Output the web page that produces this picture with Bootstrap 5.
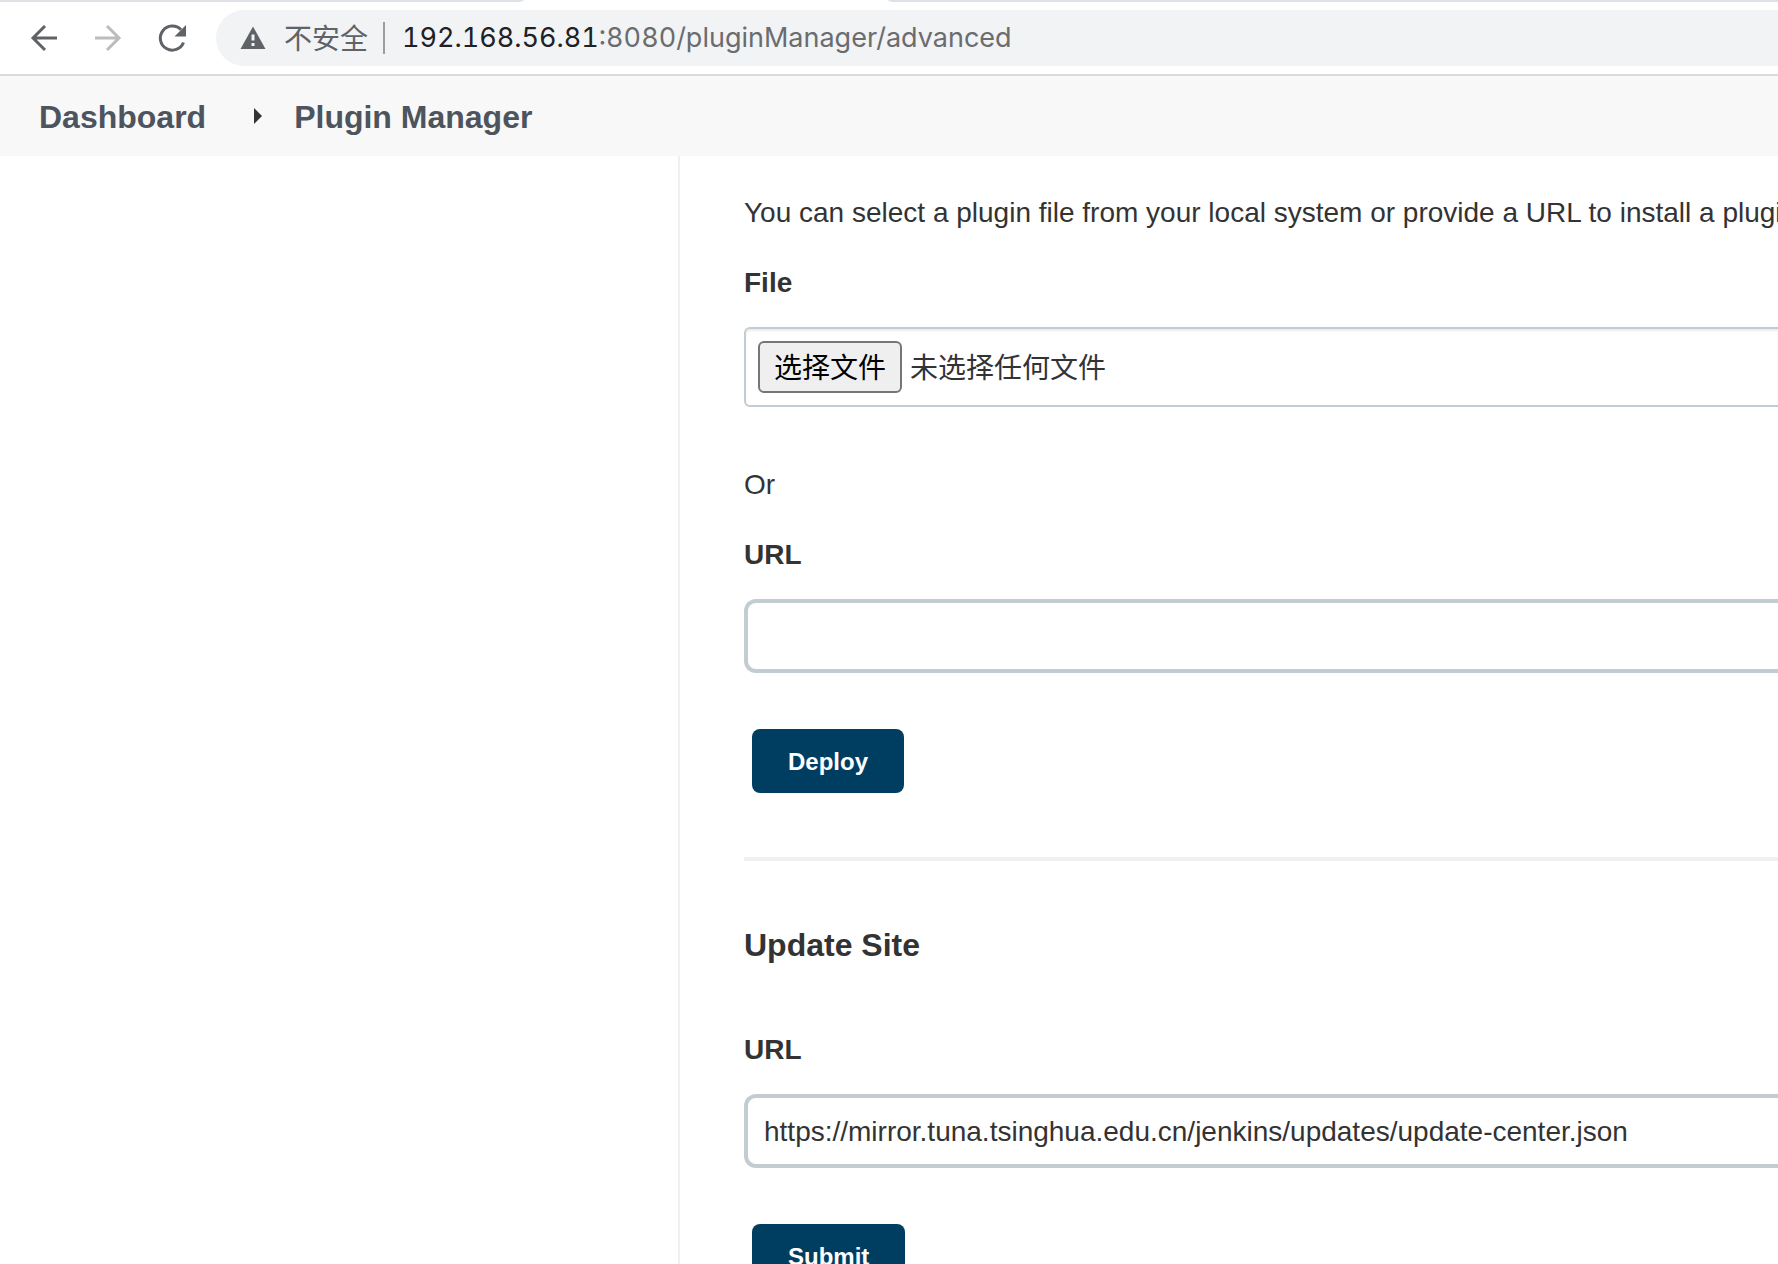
<!DOCTYPE html>
<html lang="zh-CN">
<head>
<meta charset="utf-8">
<meta name="viewport" content="width=device-width, initial-scale=1">
<title>Plugin Manager</title>
<link href="https://cdn.jsdelivr.net/npm/bootstrap@5.3.0/dist/css/bootstrap.min.css" rel="stylesheet">
<style>
  body { font-family: "Liberation Sans", "Noto Sans CJK SC", sans-serif; font-size: 28px; line-height: 40px; color: #333; background: #fff; height: 100vh; }
  /* browser chrome */
  .tabstrip { height: 2px; }
  .tab-idle { background: #dee1e6; }
  .tab-first { width: 524px; border-bottom-right-radius: 8px 2px; }
  .tab-active { width: 364px; }
  .tab-last { border-bottom-left-radius: 8px 2px; }
  .toolbar { height: 74px; padding-left: 28px; border-bottom: 2px solid #dadada; }
  .tool-group { gap: 32px; margin-right: 28px; }
  .tool-btn { width: 32px; height: 32px; color: #5f6368; }
  .tool-btn:disabled { color: #babcbe; opacity: 1; }
  .omnibox { height: 56px; background: #f1f3f4; border-radius: 28px 0 0 28px; padding-left: 23px; font-family: Inter, "Noto Sans CJK SC", sans-serif; font-size: 27px; font-variant-numeric: tabular-nums; color: #6a6c6f; }
  .omni-state { padding-top: 2px; margin-left: 17px; font-size: 28px; color: #5f6368; }
  .omni-rule { width: 2px; height: 32px; background: #9b9ea1; margin: 0 17px 0 15px; }
  .omni-host { color: #202124; }
  /* Jenkins page */
  .crumbs { height: 80px; background: #f8f8f8; padding: 2px 0 0 39px; font-size: 32px; }
  .crumbs a { color: #4d545d; }
  .crumb-arrow { margin: 0 32px 2px 48px; }
  .side-pane { width: 680px; border-right: 2px solid #f0f0f0; }
  .main-pane { min-width: 0; padding: 37px 0 0 64px; }
  .main-pane p { margin-bottom: 30px; }
  .field-label { display: block; font-weight: 700; margin-bottom: 24px; }
  .file-box { height: 80px; border: 2px solid #c3ccd1; border-radius: 6px 0 0 6px; padding-left: 12px; margin-bottom: 58px; box-shadow: inset 0 2px 2px rgba(0,0,0,.075); }
  .file-btn { width: 144px; height: 52px; border: 2px solid #767676; border-radius: 6px; background: #efefef; color: #000; padding: 4px 0 0; line-height: 40px; }
  .file-name { padding-top: 4px; }
  .jenkins-input { height: 74px; border: 4px solid #c3ccd1; border-radius: 12px 0 0 12px; padding: 2px 16px 0; font-size: 28px; color: #333; margin-bottom: 56px; }
  .jenkins-btn { display: block; min-width: 152px; height: 64px; margin-left: 8px; padding: 2px 36px 0; border: 0; border-radius: 8px; background: #003e61; color: #fff; font-size: 24px; font-weight: 700; }
  .jenkins-btn:hover { background: #00517f; color: #fff; }
  .section-rule { height: 4px; margin: 64px 0; background: #f0f0f0; opacity: 1; border: 0; }
  .section-title { font-size: 32px; line-height: 40px; font-weight: 700; margin-bottom: 65px; }
</style>
</head>
<body class="d-flex flex-column overflow-hidden">
<div class="tabstrip d-flex flex-shrink-0">
  <div class="tab-idle tab-first"></div>
  <div class="tab-active"></div>
  <div class="tab-idle tab-last flex-grow-1"></div>
</div>
<nav class="toolbar d-flex align-items-center flex-shrink-0" aria-label="浏览器工具栏">
  <div class="tool-group d-flex flex-shrink-0">
    <button class="tool-btn btn p-0 border-0 d-flex" type="button" aria-label="后退">
      <svg width="32" height="32" viewBox="0 0 32 32" fill="none" stroke="currentColor" stroke-width="3"><path d="M29 16H5M17 4L5 16l12 12"/></svg>
    </button>
    <button class="tool-btn btn p-0 border-0 d-flex" type="button" aria-label="前进" disabled>
      <svg width="32" height="32" viewBox="0 0 32 32" fill="none" stroke="currentColor" stroke-width="3"><path d="M3 16h24M15 4l12 12-12 12"/></svg>
    </button>
    <button class="tool-btn btn p-0 border-0 d-flex" type="button" aria-label="重新加载">
      <svg width="32" height="32" viewBox="0 0 32 32"><path d="M27.500 20.500A12 12 0 1 1 25 7.800" fill="none" stroke="currentColor" stroke-width="3"/><path d="M30 3v11.500H18.500z" fill="currentColor"/></svg>
    </button>
  </div>
  <div class="omnibox d-flex align-items-center flex-grow-1 text-nowrap overflow-hidden">
    <svg class="flex-shrink-0" width="28" height="28" viewBox="0 0 28 28"><path d="M14 2.500L26.500 25h-25z" fill="#5f6368"/><path d="M12.500 10.500h3v6h-3zM12.500 19h3v3h-3z" fill="#f1f3f4"/></svg>
    <span class="omni-state">不安全</span>
    <span class="omni-rule"></span>
    <div role="textbox" contenteditable="true" spellcheck="false" aria-label="地址"><span class="omni-host">192.168.56.81</span>:8080/pluginManager/advanced</div>
  </div>
</nav>
<nav class="crumbs d-flex align-items-center flex-shrink-0 fw-bold" aria-label="breadcrumb">
  <a class="text-decoration-none" href="#">Dashboard</a>
  <svg class="crumb-arrow" width="8" height="16" viewBox="0 0 8 16"><path d="M0 0l8 8-8 8z" fill="#333"/></svg>
  <a class="text-decoration-none" href="#">Plugin Manager</a>
</nav>
<div class="d-flex flex-grow-1 overflow-hidden">
  <aside class="side-pane flex-shrink-0"></aside>
  <main class="main-pane flex-grow-1 overflow-hidden">
    <form onsubmit="return false">
      <p class="text-nowrap">You can select a plugin file from your local system or provide a URL to install a plugin</p>
      <label class="field-label" for="plugin-file">File</label>
      <div class="file-box border-end-0 d-flex align-items-center gap-2">
        <button class="file-btn" type="button" onclick="document.getElementById('plugin-file').click()">选择文件</button>
        <span class="file-name">未选择任何文件</span>
        <input id="plugin-file" type="file" hidden>
      </div>
      <p>Or</p>
      <label class="field-label" for="plugin-url">URL</label>
      <input id="plugin-url" class="jenkins-input form-control border-end-0" type="text">
      <button class="jenkins-btn btn" type="submit">Deploy</button>
    </form>
    <hr class="section-rule">
    <form onsubmit="return false">
      <h2 class="section-title">Update Site</h2>
      <label class="field-label" for="site-url">URL</label>
      <input id="site-url" class="jenkins-input form-control border-end-0" type="text" value="https://mirror.tuna.tsinghua.edu.cn/jenkins/updates/update-center.json">
      <button class="jenkins-btn btn" type="submit">Submit</button>
    </form>
  </main>
</div>
<script src="https://cdn.jsdelivr.net/npm/bootstrap@5.3.0/dist/js/bootstrap.bundle.min.js"></script>
</body>
</html>
